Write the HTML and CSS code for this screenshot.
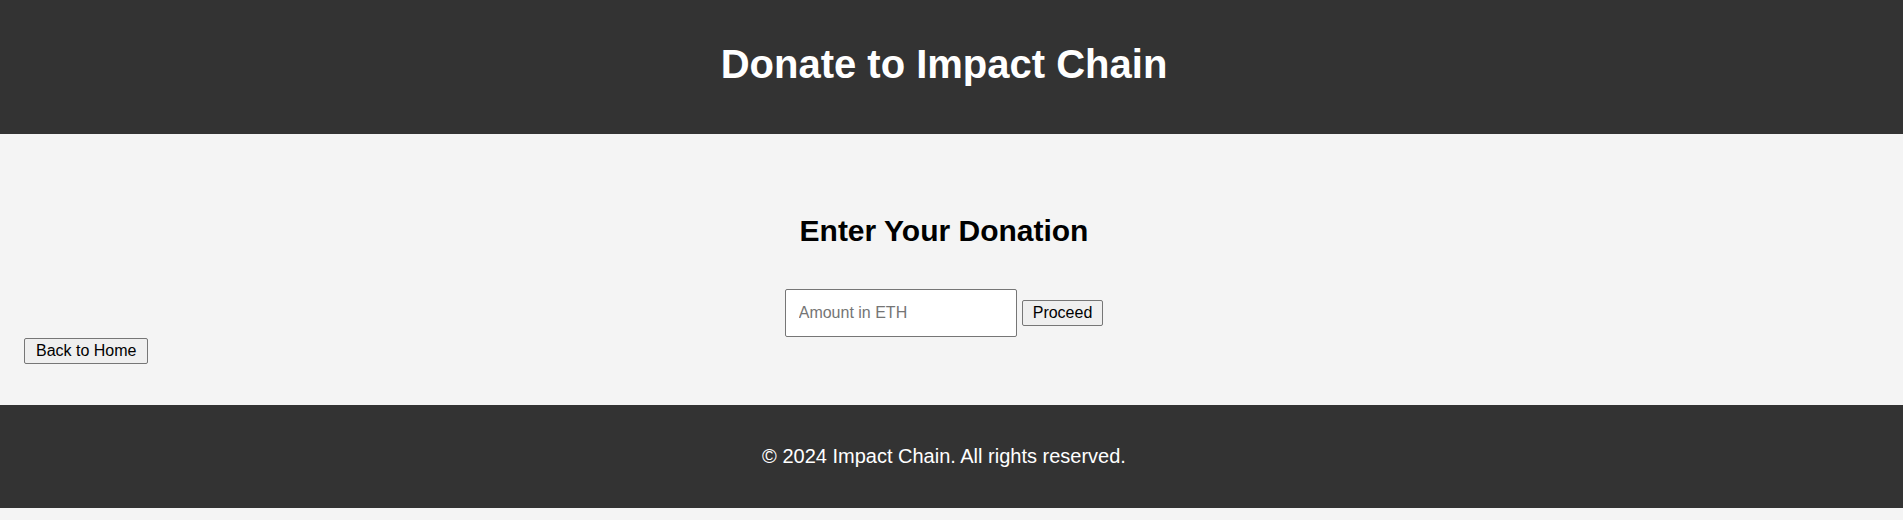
FILE: index.html
```html
<!DOCTYPE html>
<html lang="en">
<head>
<meta charset="utf-8">
<title>Donate to Impact Chain</title>
<link rel="stylesheet" href="styles.css">
</head>
<body>
<header class="site-header">
  <h1 class="site-title">Donate to Impact Chain</h1>
</header>
<main class="content">
  <section class="donate">
    <h2 class="donate-title">Enter Your Donation</h2>
    <form class="donate-form">
      <input class="amount-input" type="text" placeholder="Amount in ETH">
      <button class="btn" type="button">Proceed</button>
    </form>
  </section>
  <div class="back-row">
    <button class="btn btn-back" type="button">Back to Home</button>
  </div>
</main>
<footer class="site-footer">
  <p class="footer-text">© 2024 Impact Chain. All rights reserved.</p>
</footer>
</body>
</html>
```
FILE: styles.css
```css
html, body {
  margin: 0;
  padding: 0;
}
body {
  background: #f4f4f4;
  font-family: "Liberation Sans", Arial, sans-serif;
  color: #000;
}
.site-header {
  background: #333333;
  color: #ffffff;
  text-align: center;
  padding: 41px 15px 47px 0;
}
.site-title {
  margin: 0;
  font-size: 40px;
  line-height: 46px;
  font-weight: bold;
}
.content {
  padding: 80px 0 41px 0;
}
.donate {
  text-align: center;
  padding-right: 15px;
}
.donate-title {
  margin: 0;
  font-size: 30px;
  line-height: 34px;
  font-weight: bold;
}
.donate-form {
  margin: 41px 0 0 0;
  display: flex;
  justify-content: center;
  align-items: center;
  gap: 5px;
}
.amount-input {
  box-sizing: content-box;
  width: 204px;
  height: 18px;
  padding: 14px 13px;
  border: 1px solid #767676;
  border-radius: 2px;
  background: #ffffff;
  font-family: "Liberation Sans", Arial, sans-serif;
  font-size: 16px;
  color: #000;
  outline: none;
}
.amount-input::placeholder {
  color: #757575;
}
.btn {
  font-family: "Liberation Sans", Arial, sans-serif;
  font-size: 16px;
  line-height: 18px;
  padding: 3px 10px;
  border: 1px solid #767676;
  border-radius: 2px;
  background: #efefef;
  color: #000;
  cursor: pointer;
}
.btn-back {
  padding: 3px 11px;
}
.back-row {
  margin-top: 1px;
  padding-left: 24px;
  display: flex;
}
.site-footer {
  background: #333333;
  color: #ffffff;
  text-align: center;
  padding: 40px 15px 40px 0;
}
.footer-text {
  margin: 0;
  font-size: 20px;
  line-height: 23px;
}
```
